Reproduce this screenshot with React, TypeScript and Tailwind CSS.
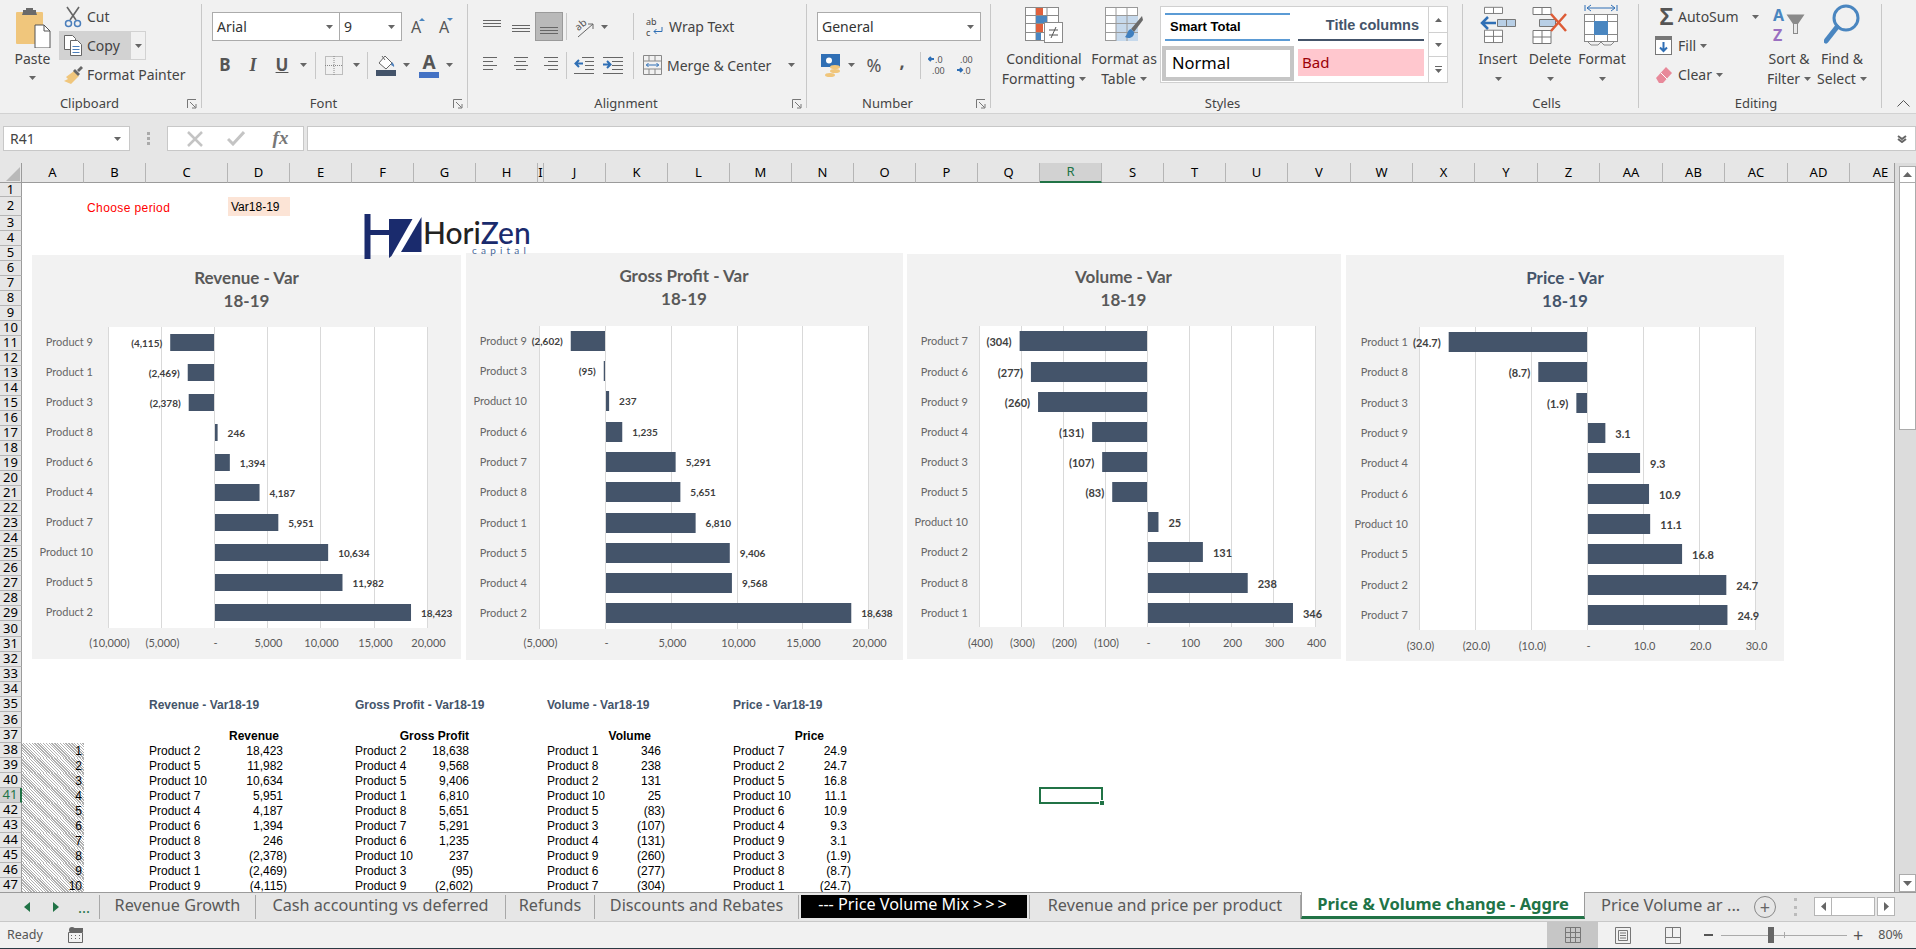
import type { ReactNode } from 'react'

type Row = [string, number]

const revenue: Row[] = [['Product 9', -4115], ['Product 1', -2469], ['Product 3', -2378], ['Product 8', 246], ['Product 6', 1394], ['Product 4', 4187], ['Product 7', 5951], ['Product 10', 10634], ['Product 5', 11982], ['Product 2', 18423]]
const profit: Row[] = [['Product 9', -2602], ['Product 3', -95], ['Product 10', 237], ['Product 6', 1235], ['Product 7', 5291], ['Product 8', 5651], ['Product 1', 6810], ['Product 5', 9406], ['Product 4', 9568], ['Product 2', 18638]]
const volume: Row[] = [['Product 7', -304], ['Product 6', -277], ['Product 9', -260], ['Product 4', -131], ['Product 3', -107], ['Product 5', -83], ['Product 10', 25], ['Product 2', 131], ['Product 8', 238], ['Product 1', 346]]
const price: Row[] = [['Product 1', -24.7], ['Product 8', -8.7], ['Product 3', -1.9], ['Product 9', 3.1], ['Product 4', 9.3], ['Product 6', 10.9], ['Product 10', 11.1], ['Product 5', 16.8], ['Product 2', 24.7], ['Product 7', 24.9]]

const fmt = (n: number, d = 0) => {
  const s = Math.abs(n).toLocaleString('en-US', { minimumFractionDigits: d, maximumFractionDigits: d })
  return n < 0 ? `(${s})` : s
}

const columns = ['A', 'B', 'C', 'D', 'E', 'F', 'G', 'H', 'I', 'J', 'K', 'L', 'M', 'N', 'O', 'P', 'Q', 'R', 'S', 'T', 'U', 'V', 'W', 'X', 'Y', 'Z', 'AA', 'AB', 'AC', 'AD', 'AE']

/* ---------- small ribbon bits ---------- */

function Tri({ color = '#666' }: { color?: string }) {
  return (
    <svg width="7" height="4" className="shrink-0">
      <path d="M0 0h7L3.5 4z" fill={color} />
    </svg>
  )
}

function Sep({ className = 'h-[27px]' }: { className?: string }) {
  return <div className={`w-px shrink-0 bg-[#c8c8c8] ${className}`} />
}

function Launcher({ className }: { className: string }) {
  return (
    <svg width="10" height="10" className={`absolute ${className}`} fill="none" stroke="#777">
      <path d="M.5 9V.5H9" />
      <path d="M3 3l5.5 5.5M9 5v4H5" />
    </svg>
  )
}

function Group({ label, className, launcher, children }: { label: string; className: string; launcher?: string; children: ReactNode }) {
  return (
    <>
      <div className={`relative flex h-full shrink-0 flex-col ${className}`}>
        <div className="flex h-[95px] shrink-0">{children}</div>
        <div className={`flex h-[18px] items-center justify-center text-[13px] ${launcher ? 'pr-[22px]' : 'pr-[8px]'}`}>{label}</div>
        {launcher && <Launcher className={launcher} />}
      </div>
      <div className="mt-1 h-[104px] w-px shrink-0 bg-[#c8c8c8]" />
    </>
  )
}

function Big({ icon, line1, line2, className }: { icon: ReactNode; line1: string; line2?: string; className: string }) {
  return (
    <div className={`flex shrink-0 flex-col items-center ${className}`}>
      <div className="flex h-[49px] items-center justify-center">{icon}</div>
      <div className="h-[20px] whitespace-nowrap leading-[20px]">{line1}</div>
      <div className="flex h-[20px] items-center gap-1 whitespace-nowrap leading-[20px]">
        {line2}
        <Tri />
      </div>
    </div>
  )
}

function Dropdown({ text, className }: { text: string; className: string }) {
  return (
    <div className={`flex h-[29px] shrink-0 items-center justify-between border border-[#ababab] bg-white pl-[4px] pr-[6px] ${className}`}>
      <span className="text-[14px] text-[#333]">{text}</span>
      <Tri />
    </div>
  )
}

function Lines({ rows }: { rows: [number, number, number][] }) {
  return (
    <svg width="20" height="20" stroke="#666">
      {rows.map(([a, b, y], i) => (
        <line key={i} x1={a} x2={b} y1={y + 0.5} y2={y + 0.5} />
      ))}
    </svg>
  )
}

function Slot({ className, children }: { className: string; children?: ReactNode }) {
  return <div className={`flex h-full shrink-0 items-center justify-center ${className}`}>{children}</div>
}

/* ---------- ribbon icons ---------- */

const PasteIcon = (
  <svg width="36" height="40">
    <rect x="1" y="4" width="27" height="32" rx="1" fill="#f0c67c" />
    <path d="M8 4V2h3V0h7v2h3v2l1 3H7z" fill="#6a6a6a" />
    <path d="M20 17h9l6 6v17H20z" fill="#fff" stroke="#555" />
    <path d="M29 17v6h6" fill="none" stroke="#555" />
  </svg>
)
const CutIcon = (
  <svg width="18" height="22" fill="none">
    <path d="M3 1l9 13M15 1L6 14" stroke="#666" strokeWidth="1.6" />
    <circle cx="4.5" cy="17.5" r="3" stroke="#4a7ebb" strokeWidth="1.5" />
    <circle cx="13.5" cy="17.5" r="3" stroke="#4a7ebb" strokeWidth="1.5" />
  </svg>
)
const CopyIcon = (
  <svg width="18" height="21" fill="#fff" stroke="#666">
    <path d="M.5.5h8l3 3v11h-11z" />
    <path d="M6.5 5.5h7l4 4v11h-11z" />
    <path d="M8.5 11.5h7M8.5 14.5h7M8.5 17.5h7" stroke="#4a7ebb" />
  </svg>
)
const PainterIcon = (
  <svg width="19" height="18">
    <path d="M10 5l5 5-8 8-7-3 4-2-2-2z" fill="#f0c67c" />
    <path d="M9 5l5 5 2-2-5-5z" fill="#666" />
    <path d="M13 4l4-4 2 2-4 4z" fill="#666" />
  </svg>
)
const BordersIcon = (
  <svg width="18" height="19" fill="none" stroke="#888" strokeDasharray="1 1">
    <rect x=".5" y=".5" width="17" height="18" />
    <path d="M9 0v19M0 9.5h18" />
  </svg>
)
const FillIcon = (
  <svg width="20" height="21">
    <path d="M9 1l7 7-6 6-7-6z" fill="#fff" stroke="#666" />
    <path d="M6 1l3 4" stroke="#666" />
    <path d="M16 7c2 2 2.5 3.5 2 5-1-1-2-1.500-3-2z" fill="#4a7ebb" />
    <rect y="15" width="20" height="6" fill="#44546a" />
  </svg>
)
const OrientIcon = (
  <svg width="26" height="26" fill="none" stroke="#666">
    <text x="4" y="14" transform="rotate(-40 10 11)" fontSize="10" fill="#555" stroke="none">ab</text>
    <path d="M7 23L22 10M22 10h-5M22 10v5" />
  </svg>
)
const OutdentIcon = (
  <svg width="20" height="20" fill="none">
    <path d="M8 2.500h12M11 6.500h9M11 10.500h9M11 14.500h9M0 18.500h20" stroke="#666" />
    <path d="M9 8.500H2M5 5L1.500 8.500 5 12" stroke="#2f6fb5" strokeWidth="2" />
  </svg>
)
const IndentIcon = (
  <svg width="20" height="20" fill="none">
    <path d="M0 2.500h20M9 6.500h11M9 10.500h11M9 14.500h11M0 18.500h20" stroke="#666" />
    <path d="M0 9.500h7M4 6l3.500 3.500L4 13" stroke="#2f6fb5" strokeWidth="2" />
  </svg>
)
const WrapIcon = (
  <svg width="20" height="24">
    <text x="1" y="10" fontSize="9" fill="#444">ab</text>
    <text x="1" y="21" fontSize="9" fill="#444">c</text>
    <path d="M17 12v4.500H9M11.500 14L9 16.500l2.500 2.500" fill="none" stroke="#2f6fb5" />
  </svg>
)
const MergeIcon = (
  <svg width="19" height="20" fill="none" stroke="#888">
    <path d="M.5.5h18v19H.5zM.5 6h18M.5 14h18M6 .5V6M12 .5V6M6 14v5.500M12 14v5.500" />
    <path d="M3 10h13M5.500 8L3.500 10l2 2M13.500 8l2 2-2 2" stroke="#2f6fb5" />
  </svg>
)
const MoneyIcon = (
  <svg width="20" height="23">
    <rect width="19" height="13" fill="#2f6fb5" />
    <circle cx="8" cy="6.500" r="3" fill="#fff" />
    <ellipse cx="14" cy="13" rx="5" ry="2" fill="#f0c67c" />
    <ellipse cx="14" cy="17" rx="5" ry="2" fill="#f0c67c" />
    <ellipse cx="9" cy="21" rx="5" ry="2" fill="#f0c67c" />
  </svg>
)
const DecIcon = ({ up }: { up: boolean }) => (
  <svg width="22" height="24">
    <text x={up ? 7 : 4} y="10" fontSize="9" fill="#555">{up ? '.0' : '.00'}</text>
    <text x={up ? 4 : 7} y="21" fontSize="9" fill="#555">{up ? '.00' : '.0'}</text>
    {up ? <path d="M6 6H1m2-2L1 6l2 2" stroke="#2f6fb5" strokeWidth="2" fill="none" /> : <path d="M1 17h5m-2-2l2 2-2 2" stroke="#2f6fb5" strokeWidth="2" fill="none" />}
  </svg>
)
const CondIcon = (
  <svg width="38" height="36" stroke="#8a8a8a">
    <rect x=".5" y=".5" width="33" height="33" fill="#fff" />
    <path d="M0 8.500h34M0 16.500h34M0 25.500h34M11 0v34M22 0v34" fill="none" />
    <rect x="11" y="1" width="7" height="7" fill="#e0603c" stroke="none" />
    <rect x="11" y="9" width="11" height="7" fill="#4a86c0" stroke="none" />
    <rect x="11" y="17" width="7" height="8" fill="#e0603c" stroke="none" />
    <rect x="11" y="26" width="5" height="7" fill="#4a86c0" stroke="none" />
    <rect x="19.500" y="15.500" width="18" height="20" fill="#fff" />
    <path d="M24 23h9M24 28h9M31 20l-5 11" fill="none" stroke="#555" />
  </svg>
)
const TableIcon = (
  <svg width="38" height="36" stroke="#9a9a9a">
    <rect x=".5" y=".5" width="32" height="33" fill="#fff" />
    <rect x="11" y="8" width="22" height="26" fill="#c6d9ec" stroke="none" />
    <path d="M0 8.500h33M0 16.500h33M0 25.500h33M11 0v34M22 0v34" fill="none" />
    <path d="M37 9L26 22l3 3 9-12z" fill="#6a6a6a" stroke="none" />
    <path d="M26 22c-4 1-3 5-6 8 5 3 10-1 9-5z" fill="#3f7fbf" stroke="none" />
  </svg>
)
const InsertIcon = (
  <svg width="36" height="38" fill="#fff" stroke="#777">
    <path d="M4.500 1.500h18v7h-18zM13.500 1.500v7M4.500 27.500h18v14h-18zM4.500 34.500h18M13.500 27.500v14" transform="scale(1 .88)" />
    <path d="M17.500 13.500h18v7h-18zM26.500 13.500v7" fill="#b8cfe6" />
    <path d="M16 17H3M8 11l-6 6 6 6" fill="none" stroke="#2f6fb5" strokeWidth="2.500" />
  </svg>
)
const DeleteIcon = (
  <svg width="36" height="38" fill="#fff" stroke="#777">
    <path d="M1 1.500h18v7H1zM10 1.500v7M1 24.500h18v13H1zM1 31h18M10 24.500v13" />
    <path d="M7.500 13.500h16v7h-16z" fill="#b8cfe6" />
    <path d="M19 8l15 17M34 8L19 25" stroke="#dd5b36" strokeWidth="2.500" />
  </svg>
)
const FormatIcon = (
  <svg width="36" height="44" fill="none" stroke="#888">
    <path d="M1 2v6M33 2v6M3 5h28M7 2L3 5l4 3M27 2l4 3-4 3" stroke="#2f6fb5" />
    <rect x=".5" y="11.500" width="33" height="27" fill="#fff" />
    <path d="M0 18.500h34M0 31.500h34M10.500 11v28M23.500 11v28" />
    <rect x="10" y="18" width="14" height="14" fill="#4a86c0" stroke="none" />
    <path d="M4 39l3 3h7l3-3M17 39l3 3h7l3-3" />
  </svg>
)
const FillDownIcon = (
  <svg width="17" height="19" fill="#fff" stroke="#777">
    <rect x=".5" y=".5" width="16" height="18" />
    <rect x=".5" y=".5" width="16" height="3" fill="#777" />
    <path d="M8.500 6v9M5 11.500L8.500 15l3.500-3.500" fill="none" stroke="#2f6fb5" strokeWidth="2" />
  </svg>
)
const EraserIcon = (
  <svg width="18" height="18">
    <path d="M11 1l6 6-9 10H4L1 12z" fill="#e8899a" />
    <path d="M6 7l6 6" stroke="#fff" />
  </svg>
)
const FunnelIcon = (
  <svg width="19" height="21">
    <path d="M.5.500h18L12 10v10H7V10z" fill="#8a8a8a" />
    <path d="M8 10h3v9H8z" fill="#e8e8e8" />
  </svg>
)
const FindIcon = (
  <svg width="36" height="42" fill="none" stroke="#4a86c0">
    <circle cx="22" cy="14" r="12" strokeWidth="3" />
    <path d="M13 23L2 37" strokeWidth="5" strokeLinecap="round" />
  </svg>
)

function Ribbon() {
  return (
    <div className="flex h-[114px] shrink-0 border-b border-[#d2d2d2] bg-[#f1f1f1] text-[14px] text-[#444]">
      <Group label="Clipboard" className="w-[201px]" launcher="left-[187px] top-[99px]">
        <div className="ml-[6px] flex w-[53px] shrink-0 flex-col items-center pt-[8px]">
          <div className="h-[41px]">{PasteIcon}</div>
          <div className="h-[20px] leading-[20px]">Paste</div>
          <div className="mt-[7px]"><Tri /></div>
        </div>
        <div className="flex flex-col pt-[2px]">
          <div className="flex h-[29px] items-center">
            <span className="flex w-[28px] justify-center">{CutIcon}</span>Cut
          </div>
          <div className="flex h-[29px] items-stretch">
            <div className="flex w-[72px] items-center bg-[#d2d2d2]">
              <span className="flex w-[28px] justify-center">{CopyIcon}</span>Copy
            </div>
            <div className="flex w-[15px] items-center justify-center border border-l-0 border-[#d2d2d2]"><Tri /></div>
          </div>
          <div className="flex h-[29px] items-center whitespace-nowrap">
            <span className="flex w-[28px] justify-center">{PainterIcon}</span>Format Painter
          </div>
        </div>
      </Group>

      <Group label="Font" className="w-[265px]" launcher="left-[251px] top-[99px]">
        <div className="flex flex-col pl-[10px] pt-[12px]">
          <div className="flex h-[29px]">
            <Dropdown text="Arial" className="w-[128px]" />
            <Dropdown text="9" className="-ml-px w-[63px]" />
            <Slot className="w-[28px]">
              <span className="relative text-[16px] text-[#555]">A<span className="absolute -right-[4px] top-[3px] border-x-[3px] border-b-[3px] border-x-transparent border-b-[#4a86c0]" /></span>
            </Slot>
            <Slot className="w-[28px]">
              <span className="relative text-[16px] text-[#555]">A<span className="absolute -right-[4px] top-[3px] border-x-[3px] border-t-[3px] border-x-transparent border-t-[#4a86c0]" /></span>
            </Slot>
          </div>
          <div className="mt-[9px] flex h-[30px] items-center">
            <Slot className="w-[26px] text-[17px] font-bold text-[#555]">B</Slot>
            <Slot className="w-[30px] font-['Liberation_Serif'] text-[18px] font-bold italic text-[#555]">I</Slot>
            <Slot className="w-[28px] text-[17px] font-bold text-[#555] underline">U</Slot>
            <Slot className="w-[14px]"><Tri /></Slot>
            <div className="ml-[5px]"><Sep /></div>
            <Slot className="w-[36px]">{BordersIcon}</Slot>
            <Slot className="w-[8px]"><Tri /></Slot>
            <div className="ml-[7px]"><Sep /></div>
            <Slot className="ml-[8px] w-[20px]">{FillIcon}</Slot>
            <Slot className="ml-[7px] w-[7px]"><Tri /></Slot>
            <Slot className="ml-[9px] w-[20px] flex-col">
              <span className="h-[18px] text-[19px] font-bold leading-[18px] text-[#555]">A</span>
              <span className="mt-[1px] h-[6px] w-[20px] bg-[#4472c4]" />
            </Slot>
            <Slot className="ml-[7px] w-[7px]"><Tri /></Slot>
          </div>
        </div>
      </Group>

      <Group label="Alignment" className="w-[338px]" launcher="left-[324px] top-[99px]">
        <div className="flex flex-col pl-[9px] pt-[12px]">
          <div className="flex h-[29px] items-center">
            <Slot className="w-[29px]"><Lines rows={[[1, 19, 3], [1, 19, 6], [1, 19, 9]]} /></Slot>
            <Slot className="w-[29px]"><Lines rows={[[1, 19, 8], [1, 19, 11], [1, 19, 14]]} /></Slot>
            <Slot className="w-[28px] border border-[#9a9a9a] bg-[#b9b9b9]"><Lines rows={[[1, 19, 10], [1, 19, 13], [1, 19, 16]]} /></Slot>
            <div className="ml-[3px]"><Sep /></div>
            <Slot className="w-[34px]">{OrientIcon}</Slot>
            <Slot className="w-[7px]"><Tri /></Slot>
            <div className="ml-[25px]"><Sep /></div>
            <div className="ml-[11px] flex items-center gap-[4px] whitespace-nowrap">{WrapIcon}Wrap Text</div>
          </div>
          <div className="mt-[9px] flex h-[30px] items-center">
            <Slot className="w-[29px]"><Lines rows={[[1, 15, 2], [1, 11, 6], [1, 15, 10], [1, 11, 14]]} /></Slot>
            <Slot className="w-[29px]"><Lines rows={[[3, 17, 2], [5, 15, 6], [3, 17, 10], [5, 15, 14]]} /></Slot>
            <Slot className="w-[28px]"><Lines rows={[[5, 19, 2], [9, 19, 6], [5, 19, 10], [9, 19, 14]]} /></Slot>
            <div className="ml-[3px]"><Sep /></div>
            <Slot className="w-[34px]">{OutdentIcon}</Slot>
            <Slot className="w-[24px]">{IndentIcon}</Slot>
            <div className="ml-[8px]"><Sep /></div>
            <div className="ml-[9px] flex items-center gap-[5px] whitespace-nowrap">{MergeIcon}Merge &amp; Center<span className="ml-[12px]"><Tri /></span></div>
          </div>
        </div>
      </Group>

      <Group label="Number" className="w-[183px]" launcher="left-[169px] top-[99px]">
        <div className="flex flex-col pl-[10px] pt-[12px]">
          <Dropdown text="General" className="w-[164px]" />
          <div className="mt-[9px] flex h-[30px] items-center">
            <Slot className="ml-[4px] w-[20px]">{MoneyIcon}</Slot>
            <Slot className="ml-[7px] w-[7px]"><Tri /></Slot>
            <Slot className="ml-[5px] w-[28px] text-[18px] text-[#555]">%</Slot>
            <Slot className="w-[28px] -translate-y-[4px] text-[18px] font-bold text-[#555]">,</Slot>
            <div className="ml-[4px]"><Sep /></div>
            <Slot className="ml-[7px] w-[22px]"><DecIcon up /></Slot>
            <Slot className="ml-[6px] w-[22px]"><DecIcon up={false} /></Slot>
          </div>
        </div>
      </Group>

      <Group label="Styles" className="w-[471px]">
        <div className="flex pl-[13px]">
          <Big icon={CondIcon} line1="Conditional" line2="Formatting" className="w-[80px]" />
          <Big icon={TableIcon} line1="Format as" line2="Table" className="ml-[4px] w-[72px]" />
          <div className="mt-[6px] flex h-[77px] w-[288px] shrink-0 border border-[#d0d0d0] bg-white">
            <div className="grid flex-1 grid-cols-[125px_126px] grid-rows-[28px_1fr] gap-x-[8px] pl-[4px] pt-[6px]">
              <div className="flex items-center border-y-2 border-y-[#5b9bd5] pl-[5px] text-[13px] font-bold text-black [font-family:'Liberation_Sans',sans-serif]">Smart Total</div>
              <div className="flex items-center justify-end border-b-2 border-b-[#44546a] pr-[5px] text-[14.5px] font-bold text-[#44546a] [font-family:'Liberation_Sans',sans-serif]">Title columns</div>
              <div className="-ml-[3px] -mr-[4px] mb-[1px] mt-[5px] flex items-center border-[4px] border-[#c6c6c6] pl-[6px] text-[16.5px] text-black">Normal</div>
              <div className="mb-[6px] mt-[8px] flex items-center bg-[#ffc7ce] pl-[4px] text-[15px] text-[#9c0006]">Bad</div>
            </div>
            <div className="flex w-[19px] shrink-0 flex-col border-l border-[#d0d0d0]">
              <div className="flex h-[26px] items-center justify-center border-b border-[#d0d0d0]"><svg width="7" height="4"><path d="M0 4h7L3.500 0z" fill="#666" /></svg></div>
              <div className="flex h-[24px] items-center justify-center border-b border-[#d0d0d0]"><Tri /></div>
              <div className="flex flex-1 flex-col items-center justify-center gap-[2px]"><span className="h-px w-[7px] bg-[#666]" /><Tri /></div>
            </div>
          </div>
        </div>
      </Group>

      <Group label="Cells" className="w-[175px]">
        <div className="flex pl-[9px]">
          <Big icon={InsertIcon} line1="Insert" className="w-[52px]" />
          <Big icon={DeleteIcon} line1="Delete" className="w-[52px]" />
          <Big icon={FormatIcon} line1="Format" className="w-[52px]" />
        </div>
      </Group>

      <Group label="Editing" className="w-[242px]">
        <div className="flex pl-[16px]">
          <div className="flex w-[106px] shrink-0 flex-col pt-[2px]">
            <div className="flex h-[29px] items-center">
              <span className="flex w-[23px] justify-center text-[24px] font-bold leading-none text-[#555] [font-family:'Liberation_Sans',sans-serif]">Σ</span>AutoSum<span className="ml-[13px]"><Tri /></span>
            </div>
            <div className="flex h-[29px] items-center">
              <span className="flex w-[23px] justify-start">{FillDownIcon}</span>Fill<span className="ml-[4px]"><Tri /></span>
            </div>
            <div className="flex h-[29px] items-center">
              <span className="flex w-[23px] justify-start">{EraserIcon}</span>Clear<span className="ml-[4px]"><Tri /></span>
            </div>
          </div>
          <Big
            icon={
              <div className="flex items-center">
                <div className="flex flex-col text-[16px] font-bold leading-[20px]">
                  <span className="text-[#4a86c0]">A</span>
                  <span className="text-[#9a6fc0]">Z</span>
                </div>
                <span className="ml-[2px]">{FunnelIcon}</span>
              </div>
            }
            line1="Sort &"
            line2="Filter"
            className="w-[56px]"
          />
          <Big icon={FindIcon} line1="Find &" line2="Select" className="w-[50px]" />
        </div>
      </Group>

      <div className="flex flex-1 items-end justify-end pb-[6px] pr-[6px]">
        <svg width="13" height="7" fill="none" stroke="#555"><path d="M.5 6.500L6.500.5l6 6" /></svg>
      </div>
    </div>
  )
}

function FormulaBar() {
  return (
    <div className="flex h-[49px] shrink-0 items-start bg-[#e6e6e6] pt-[12px]">
      <div className="ml-[3px] flex h-[25px] w-[127px] items-center justify-between border border-[#c8c8c8] bg-white pl-[6px] pr-[8px] text-[14px] text-[#444]">
        R41<Tri />
      </div>
      <div className="flex h-[25px] w-[37px] flex-col items-center justify-center gap-[2px]">
        <span className="h-[3px] w-[3px] bg-[#aaa]" />
        <span className="h-[3px] w-[3px] bg-[#aaa]" />
        <span className="h-[3px] w-[3px] bg-[#aaa]" />
      </div>
      <div className="flex h-[25px] w-[137px] items-center border border-[#c8c8c8] bg-white">
        <Slot className="w-[45px] pl-[8px]">
          <svg width="16" height="16" stroke="#c4c4c4" strokeWidth="2.500"><path d="M1 1l14 14M15 1L1 15" /></svg>
        </Slot>
        <Slot className="w-[45px]">
          <svg width="18" height="15" stroke="#c4c4c4" strokeWidth="3" fill="none"><path d="M1 8l5 5L17 1" /></svg>
        </Slot>
        <Slot className="w-[45px] font-['Liberation_Serif'] text-[19px] font-bold italic text-[#777]">fx</Slot>
      </div>
      <div className="ml-[3px] flex h-[25px] flex-1 items-center justify-end border border-[#c8c8c8] bg-white pr-[8px]">
        <svg width="10" height="8" fill="none" stroke="#666" strokeWidth="2"><path d="M1 1l4 3 4-3M1 4l4 3 4-3" /></svg>
      </div>
    </div>
  )
}

/* ---------- worksheet ---------- */

function Cell({ col, row, className = '', children }: { col: number; row: number; className?: string; children?: ReactNode }) {
  return (
    <div style={{ gridColumn: col + 1, gridRow: row + 1 }} className={`flex items-center whitespace-nowrap ${className}`}>
      {children}
    </div>
  )
}

function Block({ col, title, header, headerPad, rows, decimals = 0 }: { col: number; title: string; header: string; headerPad: string; rows: Row[]; decimals?: number }) {
  const sorted = [...rows].reverse()
  return (
    <>
      <Cell col={col} row={35} className="pl-[3px] font-bold text-[#44546a]">{title}</Cell>
      <Cell col={col + 1} row={37} className={`justify-end font-bold ${headerPad}`}>{header}</Cell>
      {sorted.map(([name, v], i) => (
        <div key={name} className="contents">
          <Cell col={col} row={38 + i} className="pl-[3px]">{name}</Cell>
          <Cell col={col + 1} row={38 + i} className={`justify-end ${v < 0 ? 'pr-[3px]' : 'pr-[7px]'}`}>{fmt(v, decimals)}</Cell>
        </div>
      ))}
    </>
  )
}

function Sheet() {
  const rowNums = Array.from({ length: 47 }, (_, i) => i + 1)
  return (
    <div className="relative h-[729px] w-[1895px] shrink-0 overflow-hidden border-r border-[#9b9b9b] bg-white text-[12px] text-black [font-family:'Liberation_Sans',sans-serif]">
      <div className="grid grid-cols-[22px_62px_62px_82px_62px_62px_62px_62px_62px_6px_62px_62px_62px_62px_62px_62px_62px_62px_62px_62px_62px_62px_63px_62px_62px_63px_62px_63px_62px_63px_62px_62px] grid-rows-[20px_14px_19px_repeat(27,15px)_16px_repeat(5,15px)_16px_repeat(11,15px)]">
        <div className="flex items-end justify-end border-b border-r border-[#9b9b9b] bg-[#e6e6e6] [grid-column:1] [grid-row:1]">
          <svg width="14" height="14" className="mb-px mr-px"><path d="M14 0v14H0z" fill="#b9b9b9" /></svg>
        </div>
        {columns.map((c, i) => (
          <div
            key={c}
            style={{ gridColumn: i + 2, gridRow: 1 }}
            className={`flex items-center justify-center overflow-hidden border-r border-[#b5b5b5] text-[13px] [font-family:'Noto_Sans',sans-serif] ${c === 'R' ? 'border-b-2 border-b-[#217346] bg-[#d2d2d2] text-[#217346]' : 'border-b border-b-[#9b9b9b] bg-[#e6e6e6]'}`}
          >
            {c}
          </div>
        ))}
        {rowNums.map(n => (
          <div
            key={n}
            style={{ gridColumn: 1, gridRow: n + 1 }}
            className={`flex items-center justify-center border-b border-b-[#b5b5b5] text-[13px] [font-family:'Noto_Sans',sans-serif] ${n === 41 ? 'border-r-2 border-r-[#217346] bg-[#d2d2d2] text-[#217346]' : 'border-r border-r-[#9b9b9b] bg-[#e6e6e6]'}`}
          >
            {n}
          </div>
        ))}

        <Cell col={2} row={2} className="pl-[3px] pt-[2px] tracking-[0.4px] text-[#ff0000]">Choose period</Cell>
        <Cell col={4} row={2} className="bg-[#fce4d6] pl-[3px]">Var18-19</Cell>

        {rowNums.slice(37).map(n => (
          <Cell key={n} col={1} row={n} className="justify-end bg-[repeating-linear-gradient(45deg,#ffffff,#ffffff_1px,#b0b0b0_1px,#b0b0b0_2px)] pr-[2px]">
            {n - 37}
          </Cell>
        ))}

        <Block col={3} title="Revenue - Var18-19" header="Revenue" headerPad="pr-[11px]" rows={revenue} />
        <Block col={6} title="Gross Profit - Var18-19" header="Gross Profit" headerPad="pr-[7px]" rows={profit} />
        <Block col={10} title="Volume - Var18-19" header="Volume" headerPad="pr-[17px]" rows={volume} />
        <Block col={13} title="Price - Var18-19" header="Price" headerPad="pr-[30px]" rows={price} decimals={1} />

        <Cell col={18} row={41} className="relative">
          <div className="absolute -inset-x-px -inset-y-px border-2 border-[#217346]" />
          <div className="absolute -bottom-[3px] -right-[3px] h-[6px] w-[6px] border border-white bg-[#217346]" />
        </Cell>
      </div>

      <Logo />
      <VarChart {...chart1} />
      <VarChart {...chart2} />
      <VarChart {...chart3} />
      <VarChart {...chart4} />
    </div>
  )
}

/* sheet starts at y=163, so page y minus 163 */
const Y0 = 163

function Logo() {
  return (
    <div className="absolute left-[364px] top-[50px] z-10 h-[50px] w-[170px] [font-family:Lato,sans-serif]">
      <svg width="60" height="46" className="absolute left-0 top-[1px]" fill="#1a2b6d">
        <rect x="0.500" y="0" width="6" height="45" />
        <rect x="6" y="16" width="20" height="5" />
        <path d="M25 5h23.500L27.500 42 25 44z" />
        <path d="M57.500 3v35H37z" />
      </svg>
      <span className="absolute left-[59px] top-[11px] text-[30px] font-medium leading-[16px] text-[#222]">Hori<span className="text-[#1a2b6d]">Zen</span></span>
      <span className="absolute left-[108px] top-[32px] text-[10px] leading-[10px] tracking-[0.42em] text-[#4a6a9a]">capital</span>
    </div>
  )
}

type ChartProps = {
  box: [number, number, number, number]
  plot: [number, number, number, number]
  zero: number
  unit: number
  ticks: number[]
  rows: Row[]
  tops: number[]
  barH: number
  catRight: number
  title: string
  titleX: number
  titleY: number
  titleColor?: string
  axisY: number
  labelSize: number
  decimals?: number
}

function VarChart({ box, plot, zero, unit, ticks, rows, tops, barH, catRight, title, titleX, titleY, titleColor = '#595959', axisY, labelSize, decimals = 0 }: ChartProps) {
  const [bx, by, bw, bh] = box
  const [px, py, pr, pb] = plot
  return (
    <svg
      width={bw}
      height={bh}
      viewBox={`${bx} ${by} ${bw} ${bh}`}
      style={{ left: bx, top: by - Y0 }}
      className="absolute bg-[#f2f2f2] [font-family:Lato,sans-serif]"
    >
      <text x={titleX} y={titleY} textAnchor="middle" dominantBaseline="central" fontSize="17" fontWeight="700" fill={titleColor}>{title}</text>
      <text x={titleX} y={titleY + 23} textAnchor="middle" dominantBaseline="central" fontSize="17" fontWeight="700" fill={titleColor}>18-19</text>
      <rect x={px} y={py} width={pr - px} height={pb - py} fill="#fff" />
      {ticks.map(t => {
        const x = Math.round(zero + t * unit) + 0.5
        return (
          <g key={t}>
            <line x1={x} x2={x} y1={py} y2={pb} stroke="#d9d9d9" />
            <text x={x + 1} y={axisY} textAnchor="middle" dominantBaseline="central" fontSize="11" fill="#595959">{t === 0 ? '-' : fmt(t, decimals)}</text>
          </g>
        )
      })}
      {rows.map(([name, v], i) => {
        const y = tops[i]
        const cy = y + barH / 2
        const len = Math.abs(v) * unit
        const left = v < 0 ? zero - len : zero + 1
        return (
          <g key={name}>
            <text x={catRight} y={cy - 1} textAnchor="end" dominantBaseline="central" fontSize="11" fill="#666666">{name}</text>
            <rect x={left} y={y} width={Math.max(len, 1)} height={barH} fill="#44546a" />
            <text
              x={v < 0 ? left - 8 : left + len + 10}
              y={cy}
              textAnchor={v < 0 ? 'end' : 'start'}
              dominantBaseline="central"
              fontSize={labelSize}
              fontWeight="700"
              fill="#404040"
            >
              {fmt(v, decimals)}
            </text>
          </g>
        )
      })}
    </svg>
  )
}

const chart1: ChartProps = {
  box: [32, 255, 429, 404], plot: [108, 327, 428, 628], zero: 214, unit: 53.2 / 5000,
  ticks: [-10000, -5000, 0, 5000, 10000, 15000, 20000], rows: revenue,
  tops: [334, 364, 394, 424, 454, 484, 514, 544, 574, 604], barH: 17, catRight: 93,
  title: 'Revenue - Var', titleX: 246.5, titleY: 277, axisY: 642, labelSize: 10,
}
const chart2: ChartProps = {
  box: [466, 253, 437, 407], plot: [539, 326, 869, 629], zero: 605, unit: 65.8 / 5000,
  ticks: [-5000, 0, 5000, 10000, 15000, 20000], rows: profit,
  tops: [331, 361, 391, 422, 452, 482, 513, 543, 573, 603], barH: 20, catRight: 527,
  title: 'Gross Profit - Var', titleX: 684, titleY: 275, axisY: 642.5, labelSize: 10,
}
const chart3: ChartProps = {
  box: [907, 254, 434, 405], plot: [979, 326, 1315, 627], zero: 1147, unit: 41.9 / 100,
  ticks: [-400, -300, -200, -100, 0, 100, 200, 300, 400], rows: volume,
  tops: [331, 362, 392, 422, 452, 482, 512, 542, 573, 603], barH: 20, catRight: 968,
  title: 'Volume - Var', titleX: 1123.5, titleY: 276, axisY: 642, labelSize: 11,
}
const chart4: ChartProps = {
  box: [1346, 255, 438, 406], plot: [1419, 327, 1756, 630], zero: 1587, unit: 5.6,
  ticks: [-30, -20, -10, 0, 10, 20, 30], rows: price,
  tops: [332, 362, 393, 423, 453, 484, 514, 544, 575, 605], barH: 20, catRight: 1408,
  title: 'Price - Var', titleX: 1565, titleY: 277, titleColor: '#44546a', axisY: 645, labelSize: 11, decimals: 1,
}

function Scrollbar() {
  return (
    <div className="flex h-[729px] w-[21px] shrink-0 flex-col bg-[#dcdcdc] pl-[4px] pt-[3px]">
      <div className="flex h-[17px] items-center justify-center border border-[#ababab] bg-white">
        <svg width="9" height="5"><path d="M0 5h9L4.500 0z" fill="#666" /></svg>
      </div>
      <div className="h-[247px] border-x border-b border-[#ababab] bg-white" />
      <div className="flex-1" />
      <div className="flex h-[18px] items-center justify-center border border-[#ababab] bg-white">
        <svg width="9" height="5"><path d="M0 0h9L4.500 5z" fill="#666" /></svg>
      </div>
    </div>
  )
}

function TabBar() {
  const tabClass = 'flex h-[24px] shrink-0 items-center justify-center whitespace-nowrap border-r border-[#a8a8a8] pb-[4px]'
  return (
    <div className="flex h-[30px] shrink-0 items-start border-y border-y-[#c8c8c8] border-t-[#9b9b9b] bg-[#e6e6e6] text-[16.2px] text-[#595959]">
      <div className="mt-[2px] flex h-[24px] w-[100px] shrink-0 items-center border-r border-[#a8a8a8]">
        <svg width="6" height="10" className="ml-[24px]"><path d="M6 0v10L0 5z" fill="#217346" /></svg>
        <svg width="6" height="10" className="ml-[23px]"><path d="M0 0v10l6-5z" fill="#217346" /></svg>
        <span className="ml-[19px] text-[15px] text-[#217346]">...</span>
      </div>
      <div className={`mt-[2px] w-[156px] ${tabClass}`}>Revenue Growth</div>
      <div className={`mt-[2px] w-[250px] ${tabClass}`}>Cash accounting vs deferred</div>
      <div className={`mt-[2px] w-[89px] ${tabClass}`}>Refunds</div>
      <div className={`mt-[2px] w-[204px] ${tabClass}`}>Discounts and Rebates</div>
      <div className="ml-[2px] mt-[2px] flex h-[23px] w-[226px] shrink-0 items-center justify-center whitespace-nowrap bg-black pb-[4px] text-white">--- Price Volume Mix <span className="ml-[4px] tracking-[3px]">&gt;&gt;&gt;</span></div>
      <div className={`ml-[2px] mt-[2px] w-[272px] border-l ${tabClass}`}>Revenue and price per product</div>
      <div className="-mt-px flex h-[27px] w-[284px] shrink-0 items-center justify-center whitespace-nowrap border-x border-b-[3px] border-x-[#9b9b9b] border-b-[#217346] bg-white text-[16.5px] font-bold text-[#217346]">Price &amp; Volume change - Aggre</div>
      <div className="mt-[2px] flex h-[24px] w-[169px] shrink-0 items-center whitespace-nowrap pb-[4px] pl-[16px] text-[16.5px]">Price Volume ar ...</div>
      <div className="mt-[3px] flex h-[22px] w-[22px] shrink-0 items-center justify-center rounded-full border border-[#888] text-[18px] leading-none text-[#666]">+</div>
      <div className="ml-[18px] mt-[5px] flex h-[18px] flex-col justify-between">
        <span className="h-[3px] w-[3px] bg-[#bbb]" />
        <span className="h-[3px] w-[3px] bg-[#bbb]" />
        <span className="h-[3px] w-[3px] bg-[#bbb]" />
      </div>
      <div className="ml-[17px] mt-[4px] flex h-[19px] shrink-0">
        <div className="flex w-[18px] items-center justify-center border border-[#b5b5b5] bg-white"><svg width="5" height="9"><path d="M5 0v9L0 4.500z" fill="#666" /></svg></div>
        <div className="w-[43px] border-y border-r border-[#b5b5b5] bg-white" />
        <div className="ml-[2px] flex w-[18px] items-center justify-center border border-[#b5b5b5] bg-white"><svg width="5" height="9"><path d="M0 0v9l5-4.500z" fill="#666" /></svg></div>
      </div>
    </div>
  )
}

function StatusBar() {
  return (
    <div className="flex h-[27px] shrink-0 items-center border-b border-b-[#2b3a44] bg-[#f1f1f1] text-[12.5px] text-[#555]">
      <span className="ml-[7px] w-[61px]">Ready</span>
      <svg width="15" height="16" fill="none" stroke="#666">
        <path d="M.5 5.500h14v10H.5z" />
        <circle cx="4" cy="3" r="3" fill="#666" stroke="none" />
        <rect x="4" y="1" width="11" height="4" fill="#666" stroke="none" />
        <path d="M3 8.500h2M7 8.500h2M11 8.500h2M3 11.500h2M7 11.500h2M11 11.500h2" strokeDasharray="1 1" />
      </svg>
      <div className="flex-1" />
      <div className="flex h-full w-[51px] items-center justify-center bg-[#c6c6c6]">
        <svg width="16" height="16" fill="none" stroke="#777"><path d="M.5.5h15v15H.5zM.5 5.500h15M.5 10.500h15M5.500.5v15M10.500.5v15" /></svg>
      </div>
      <div className="flex w-[50px] justify-center">
        <svg width="16" height="17" fill="none" stroke="#777"><path d="M.5.5h15v16H.5zM3.500 3.500h9v10h-9zM5 6h6M5 8.500h6M5 11h6" /></svg>
      </div>
      <div className="flex w-[50px] justify-center">
        <svg width="16" height="17" fill="none" stroke="#777"><path d="M.5.5h15v16H.5zM.5 10.500h7v-10M15.500 10.500h-8" /></svg>
      </div>
      <span className="ml-[6px] h-[2px] w-[9px] bg-[#555]" />
      <div className="relative ml-[8px] flex h-[16px] w-[126px] items-center">
        <div className="h-px w-full bg-[#aaa]" />
        <div className="absolute left-[47px] h-[16px] w-[6px] bg-[#666]" />
        <div className="absolute left-[63px] h-[6px] w-px bg-[#aaa]" />
      </div>
      <span className="ml-[6px] text-[18px] leading-none">+</span>
      <span className="ml-[15px] mr-[13px] text-[12.5px]">80%</span>
    </div>
  )
}

export default function App() {
  return (
    <div className="flex h-[949px] w-[1916px] flex-col overflow-hidden bg-white [font-family:'Noto_Sans',sans-serif]">
      <Ribbon />
      <FormulaBar />
      <div className="flex h-[729px] shrink-0">
        <Sheet />
        <Scrollbar />
      </div>
      <TabBar />
      <StatusBar />
    </div>
  )
}
